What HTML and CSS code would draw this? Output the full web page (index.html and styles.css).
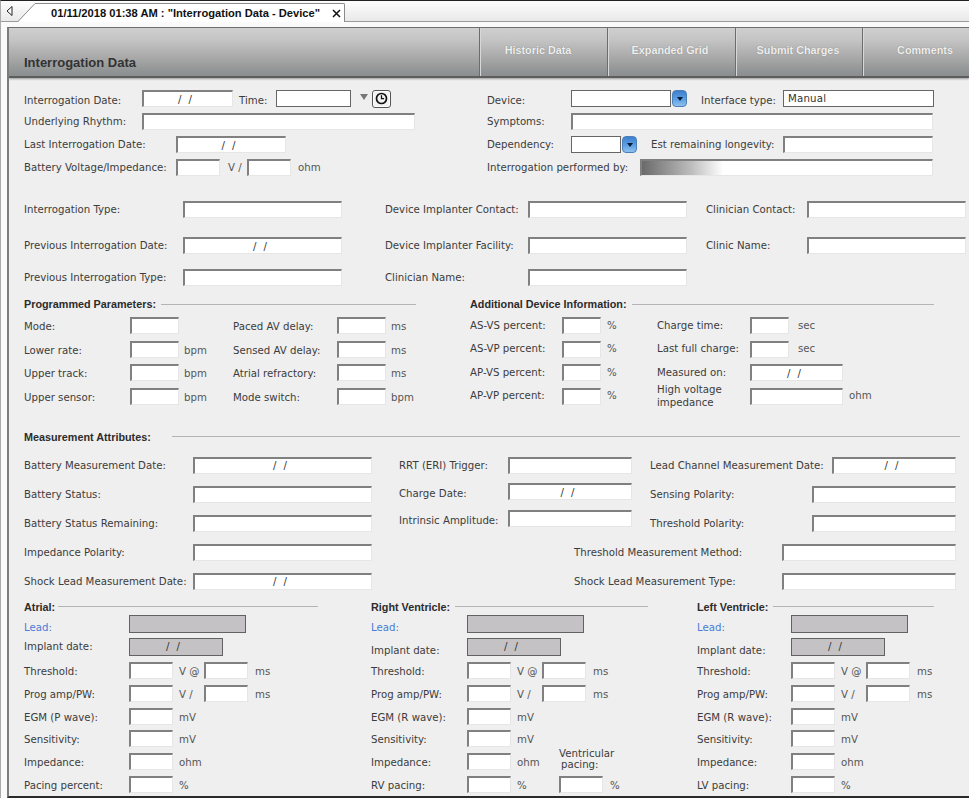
FILE: index.html
```html
<!DOCTYPE html>
<html lang="en">
<head>
<meta charset="utf-8">
<title>Interrogation Data - Device</title>
<link rel="stylesheet" href="styles.css">
</head>
<body>
<div class="app">
  <div class="tabstrip">
    <svg class="back" width="8" height="10" viewBox="0 0 8 10"><path d="M6 .5 1 5l5 4.5z" fill="#fff" stroke="#222"/></svg>
    <svg class="tab-slant" width="18" height="19" viewBox="0 0 18 19"><path d="M0 19 17 .5H18V19z" fill="#fff"/><path d="M0 18.5 17 .5H18" fill="none" stroke="#8a8a8a"/></svg>
    <div class="tab">
      <span class="tab-title">01/11/2018 01:38 AM : "Interrogation Data - Device"</span>
      <svg class="tab-close" width="9" height="9" viewBox="0 0 9 9"><path d="M1 1l7 7M8 1 1 8" stroke="#111" stroke-width="1.5"/></svg>
    </div>
  </div>

  <div class="panel">
    <header class="panel-head">
      <h1 class="title">Interrogation Data</h1>
      <nav class="actions">
        <a class="action a-128">Historic Data</a>
        <a class="action a-128">Expanded Grid</a>
        <a class="action a-127">Submit Charges</a>
        <a class="action a-107">Comments</a>
      </nav>
    </header>

    <main class="form">
      <section class="split">
        <div class="stack col-463 lift">
          <div class="row first">
            <label class="lb w-118">Interrogation Date:</label><input class="field w-91" value="/ /" readonly>
            <label class="lb w-37 ml-6">Time:</label><input class="field dark w-75" readonly>
            <span class="drop-slot"><i class="tri"></i></span>
            <button class="clock" type="button"><svg width="13" height="13" viewBox="0 0 13 13"><circle cx="6.5" cy="6.5" r="5" fill="none" stroke="#111" stroke-width="1.7"/><path d="M6.5 3.2v3.5h2.6" fill="none" stroke="#111" stroke-width="1.3"/></svg></button>
          </div>
          <div class="row"><label class="lb w-118">Underlying Rhythm:</label><input class="field w-273" readonly></div>
          <div class="row"><label class="lb w-152">Last Interrogation Date:</label><input class="field w-110" value="/ /" readonly></div>
          <div class="row">
            <label class="lb w-152">Battery Voltage/Impedance:</label><input class="field w-44" readonly>
            <span class="unit ml-8 w-19">V /</span><input class="field w-44" readonly><span class="unit ml-7">ohm</span>
          </div>
        </div>
        <div class="stack lift">
          <div class="row first">
            <label class="lb w-84">Device:</label><input class="field dark w-100" readonly>
            <button class="spin" type="button"><i></i></button>
            <label class="lb w-82 ml-14">Interface type:</label><input class="field dark w-151 left" value="Manual" readonly>
          </div>
          <div class="row"><label class="lb w-84">Symptoms:</label><input class="field w-362" readonly></div>
          <div class="row">
            <label class="lb w-84">Dependency:</label><input class="field dark w-50" readonly>
            <button class="spin" type="button"><i></i></button>
            <label class="lb w-132 ml-14">Est remaining longevity:</label><input class="field w-150" readonly>
          </div>
          <div class="row"><label class="lb w-153">Interrogation performed by:</label><input class="field busy w-293" readonly></div>
        </div>
      </section>

      <section class="contacts lift">
        <div class="row">
          <label class="lb w-159">Interrogation Type:</label><input class="field w-159" readonly>
          <label class="lb w-143 ml-43">Device Implanter Contact:</label><input class="field w-159" readonly>
          <label class="lb w-101 ml-19">Clinician Contact:</label><input class="field w-159" readonly>
        </div>
        <div class="row">
          <label class="lb w-159">Previous Interrogation Date:</label><input class="field w-159" value="/ /" readonly>
          <label class="lb w-143 ml-43">Device Implanter Facility:</label><input class="field w-159" readonly>
          <label class="lb w-101 ml-19">Clinic Name:</label><input class="field w-159" readonly>
        </div>
        <div class="row">
          <label class="lb w-159">Previous Interrogation Type:</label><input class="field w-159" readonly>
          <label class="lb w-143 ml-43">Clinician Name:</label><input class="field w-159" readonly>
        </div>
      </section>

      <section class="split params">
        <div class="col-446">
          <h2 class="heading w-392"><span>Programmed Parameters:</span></h2>
          <div class="stack tight sink">
            <div class="row"><label class="lb w-106">Mode:</label><input class="field w-49" readonly><span class="unit ml-5 w-49"></span><label class="lb w-104">Paced AV delay:</label><input class="field w-49" readonly><span class="unit ml-5">ms</span></div>
            <div class="row"><label class="lb w-106">Lower rate:</label><input class="field w-49" readonly><span class="unit ml-5 w-49">bpm</span><label class="lb w-104">Sensed AV delay:</label><input class="field w-49" readonly><span class="unit ml-5">ms</span></div>
            <div class="row"><label class="lb w-106">Upper track:</label><input class="field w-49" readonly><span class="unit ml-5 w-49">bpm</span><label class="lb w-104">Atrial refractory:</label><input class="field w-49" readonly><span class="unit ml-5">ms</span></div>
            <div class="row"><label class="lb w-106">Upper sensor:</label><input class="field w-49" readonly><span class="unit ml-5 w-49">bpm</span><label class="lb w-104">Mode switch:</label><input class="field w-49" readonly><span class="unit ml-5">bpm</span></div>
          </div>
        </div>
        <div>
          <h2 class="heading w-464"><span>Additional Device Information:</span></h2>
          <div class="stack tight lift">
            <div class="row"><label class="lb w-92">AS-VS percent:</label><input class="field w-39" readonly><span class="unit ml-6 w-50">%</span><label class="lb w-93">Charge time:</label><input class="field w-39" readonly><span class="unit ml-9">sec</span></div>
            <div class="row"><label class="lb w-92">AS-VP percent:</label><input class="field w-39" readonly><span class="unit ml-6 w-50">%</span><label class="lb w-93">Last full charge:</label><input class="field w-39" readonly><span class="unit ml-9">sec</span></div>
            <div class="row"><label class="lb w-92">AP-VS percent:</label><input class="field w-39" readonly><span class="unit ml-6 w-50">%</span><label class="lb w-93">Measured on:</label><input class="field w-93" value="/ /" readonly></div>
            <div class="row"><label class="lb w-92">AP-VP percent:</label><input class="field w-39" readonly><span class="unit ml-6 w-50">%</span><label class="lb w-93 wrap">High voltage impedance</label><input class="field w-93" readonly><span class="unit ml-6">ohm</span></div>
          </div>
        </div>
      </section>

      <section class="measure">
        <h2 class="heading w-936 measure-head"><span>Measurement Attributes:</span></h2>
        <div class="split">
          <div class="stack wide col-375">
            <div class="row"><label class="lb w-169">Battery Measurement Date:</label><input class="field w-179" value="/ /" readonly></div>
            <div class="row"><label class="lb w-169">Battery Status:</label><input class="field w-179" readonly></div>
            <div class="row"><label class="lb w-169">Battery Status Remaining:</label><input class="field w-179" readonly></div>
            <div class="row"><label class="lb w-169">Impedance Polarity:</label><input class="field w-179" readonly></div>
            <div class="row"><label class="lb w-169">Shock Lead Measurement Date:</label><input class="field w-179" value="/ /" readonly></div>
          </div>
          <div class="stack wide">
            <div class="split">
              <div class="stack mid col-251">
                <div class="row"><label class="lb w-109">RRT (ERI) Trigger:</label><input class="field w-124" readonly></div>
                <div class="row"><label class="lb w-109 sunk">Charge Date:</label><input class="field w-124" value="/ /" readonly></div>
                <div class="row"><label class="lb w-109 sunk">Intrinsic Amplitude:</label><input class="field w-124" readonly></div>
              </div>
              <div class="stack wide">
                <div class="row"><label class="lb w-182">Lead Channel Measurement Date:</label><input class="field w-124" value="/ /" readonly></div>
                <div class="row"><label class="lb w-162">Sensing Polarity:</label><input class="field w-144" readonly></div>
                <div class="row"><label class="lb w-162">Threshold Polarity:</label><input class="field w-144" readonly></div>
              </div>
            </div>
            <div class="row indent-175"><label class="lb w-208">Threshold Measurement Method:</label><input class="field w-174" readonly></div>
            <div class="row indent-175"><label class="lb w-208">Shock Lead Measurement Type:</label><input class="field w-174" readonly></div>
          </div>
        </div>
      </section>

      <section class="split chambers">
        <div class="chamber col-347">
          <h2 class="heading short w-294"><span>Atrial:</span></h2>
          <div class="leads">
            <div class="row tall"><label class="lb w-105 link low">Lead:</label><input class="field off w-117" readonly></div>
            <div class="row tall"><label class="lb w-105">Implant date:</label><input class="field off w-94" value="/ /" readonly></div>
          </div>
          <div class="vals">
            <div class="row"><label class="lb w-105">Threshold:</label><input class="field w-44" readonly><span class="unit ml-6 w-25">V @</span><input class="field w-44" readonly><span class="unit ml-7">ms</span></div>
            <div class="row"><label class="lb w-105">Prog amp/PW:</label><input class="field w-44" readonly><span class="unit ml-6 w-25">V /</span><input class="field w-44" readonly><span class="unit ml-7">ms</span></div>
            <div class="row"><label class="lb w-105">EGM (P wave):</label><input class="field w-44" readonly><span class="unit ml-6">mV</span></div>
            <div class="row"><label class="lb w-105">Sensitivity:</label><input class="field w-44" readonly><span class="unit ml-6">mV</span></div>
            <div class="row"><label class="lb w-105">Impedance:</label><input class="field w-44" readonly><span class="unit ml-6">ohm</span></div>
            <div class="row"><label class="lb w-105">Pacing percent:</label><input class="field w-44" readonly><span class="unit ml-6">%</span></div>
          </div>
        </div>
        <div class="chamber col-326">
          <h2 class="heading w-277"><span>Right Ventricle:</span></h2>
          <div class="leads">
            <div class="row tall"><label class="lb w-96 link low">Lead:</label><input class="field off w-117" readonly></div>
            <div class="row tall"><label class="lb w-96 low">Implant date:</label><input class="field off w-94" value="/ /" readonly></div>
          </div>
          <div class="vals">
            <div class="row"><label class="lb w-96">Threshold:</label><input class="field w-44" readonly><span class="unit ml-6 w-25">V @</span><input class="field w-44" readonly><span class="unit ml-7">ms</span></div>
            <div class="row"><label class="lb w-96">Prog amp/PW:</label><input class="field w-44" readonly><span class="unit ml-6 w-25">V /</span><input class="field w-44" readonly><span class="unit ml-7">ms</span></div>
            <div class="row"><label class="lb w-96">EGM (R wave):</label><input class="field w-44" readonly><span class="unit ml-6">mV</span></div>
            <div class="row"><label class="lb w-96">Sensitivity:</label><input class="field w-44" readonly><span class="unit ml-6">mV</span></div>
            <div class="row"><label class="lb w-96">Impedance:</label><input class="field w-44" readonly><span class="unit ml-6 w-42">ohm</span><label class="lb two-line">Ventricular<br><span class="nudge">pacing:</span></label></div>
            <div class="row"><label class="lb w-96">RV pacing:</label><input class="field w-44" readonly><span class="unit ml-6 w-42">%</span><input class="field w-44" readonly><span class="unit ml-7">%</span></div>
          </div>
        </div>
        <div class="chamber">
          <h2 class="heading w-237"><span>Left Ventricle:</span></h2>
          <div class="leads">
            <div class="row tall"><label class="lb w-94 link low">Lead:</label><input class="field off w-117" readonly></div>
            <div class="row tall"><label class="lb w-94 low">Implant date:</label><input class="field off w-94" value="/ /" readonly></div>
          </div>
          <div class="vals">
            <div class="row"><label class="lb w-94">Threshold:</label><input class="field w-44" readonly><span class="unit ml-6 w-25">V @</span><input class="field w-44" readonly><span class="unit ml-7">ms</span></div>
            <div class="row"><label class="lb w-94">Prog amp/PW:</label><input class="field w-44" readonly><span class="unit ml-6 w-25">V /</span><input class="field w-44" readonly><span class="unit ml-7">ms</span></div>
            <div class="row"><label class="lb w-94">EGM (R wave):</label><input class="field w-44" readonly><span class="unit ml-6">mV</span></div>
            <div class="row"><label class="lb w-94">Sensitivity:</label><input class="field w-44" readonly><span class="unit ml-6">mV</span></div>
            <div class="row"><label class="lb w-94">Impedance:</label><input class="field w-44" readonly><span class="unit ml-6">ohm</span></div>
            <div class="row"><label class="lb w-94">LV pacing:</label><input class="field w-44" readonly><span class="unit ml-6">%</span></div>
          </div>
        </div>
      </section>
    </main>
  </div>
</div>
</body>
</html>
```

FILE: styles.css
```css
* { box-sizing: border-box; }
html, body { margin: 0; height: 100%; overflow: hidden; }
body { background: #fafafa; font: 10.2px "DejaVu Sans", sans-serif; color: #3c3c3c; }

.app { height: 798px; display: flex; flex-direction: column; border-top: 1px solid #222; border-left: 1px solid #aaa; overflow: hidden; }

/* tab strip */
.tabstrip { height: 21px; flex: none; display: flex; align-items: flex-end; background: linear-gradient(#fdfdfd, #e9e9ea); border-bottom: 1px solid #9a9a9a; position: relative; }
.back { align-self: center; margin: 0 4px 0 5px; }
.tab-slant { margin-bottom: -1px; flex: none; }
.tab { width: 309px; height: 19px; margin-bottom: -1px; background: #fff; border-top: 1px solid #8a8a8a; border-right: 1px solid #8a8a8a; border-radius: 0 2px 0 0; display: flex; align-items: center; padding-left: 15px; }
.tab-title { font: bold 11.15px "Liberation Sans", sans-serif; color: #111; white-space: nowrap; width: 281px; }

/* panel */
.panel { flex: 1; min-height: 0; margin: 5px 0 0 6px; background: #efefef; border-left: 2px solid #7c7c7c; border-top: 1px solid #6e6e6e; border-bottom: 2px solid #2a2a2a; overflow: hidden; }
.panel-head { height: 50px; display: flex; justify-content: space-between; background: linear-gradient(#cfcfcf, #c4c4c4 25%, #a6a6a6 65%, #8b8f8f 97%); border-bottom: 2px solid #5d5d5d; box-shadow: 0 1px 2px #999; }
.title { margin: 0; align-self: flex-end; padding: 0 0 6px 15px; font: bold 13px "Liberation Sans", sans-serif; color: #333; }
.actions { display: flex; }
.action { display: flex; align-items: center; justify-content: center; padding-bottom: 4px; font: bold 10.8px "Liberation Sans", sans-serif; color: #efefef; text-shadow: 0 0 1px #777; border-left: 1px solid #6c6c6c; box-shadow: inset 1px 0 0 #d8d8d8; }
.action:nth-child(1) { padding-right: 11px; }
.action:nth-child(2) { padding-right: 3px; }
.action:nth-child(3) { padding-right: 2px; }
.action:nth-child(4) { padding-left: 18px; }
.a-128 { width: 128px; }
.a-127 { width: 127px; }
.a-107 { width: 107px; }

/* form */
.form { padding: 12px 0 0 15px; }
.split { display: flex; }
.stack { display: flex; flex-direction: column; gap: 6px; }
.stack.tight { gap: 6.67px; }
.stack.wide { gap: 12px; }
.stack.mid { gap: 9.4px; }
.row { display: flex; align-items: center; height: 17px; }
.row.tall { height: 18px; }
.lb { flex: none; white-space: nowrap; }
.lb.wrap { white-space: normal; line-height: 13px; margin-top: 1px; }
.lb.link { color: #4a7bd6; }
.lb.low { padding-top: 8px; }
.two-line { line-height: 11px; margin-bottom: 7px; }
.nudge { margin-left: 2px; }
.unit { flex: none; white-space: nowrap; color: #555; }

/* labels that sit a pixel above or below their field's centre */
.lift .row > .lb, .lift .row > .unit { padding-bottom: 1px; }
.lift .row.first > .lb { padding-bottom: 0; padding-top: 4px; }
.sink .row > .lb, .sink .row > .unit, .lb.sunk { padding-top: 2px; }
.lb.sunk { padding-top: 4px; }
.vals .row > .lb, .vals .row > .unit { padding-top: 2px; }

.field { flex: none; height: 17px; padding: 0; background: #fff; border: 1px solid #e6e6e6; border-top: 2px solid #808080; border-left: 2px solid #808080; text-align: center; font: 10.2px "DejaVu Sans", sans-serif; color: #333; outline: none; }
.field[value="/ /"] { padding-right: 6px; word-spacing: 4px; }
.field.dark { border: 1px solid #666; }
.field.left { text-align: left; padding-left: 4px; letter-spacing: .2px; }
.field.off { height: 18px; background: #c4c2c4; border: 1px solid #626262; }
.field.busy { background: linear-gradient(90deg, #6a6a6a, #bdbdbd 17%, #fff 28%); }

.drop-slot { width: 21px; flex: none; display: flex; justify-content: flex-end; padding-right: 4px; margin-top: -3px; }
.tri { width: 0; height: 0; border: 4px solid transparent; border-top: 6px solid #777; border-bottom: 0; }
.clock { width: 19px; height: 18px; padding: 0; flex: none; display: flex; align-items: center; justify-content: center; background: #f2f2f2; border: 1px solid #555; border-radius: 3px; box-shadow: inset 0 0 0 1px #fff; }
.spin { width: 15px; height: 17px; padding: 0; margin-left: 1px; flex: none; display: flex; align-items: center; justify-content: center; background: linear-gradient(#3f7fce, #5c9fe4 55%, #8fc0ee); border: 1px solid #4a7fb8; border-radius: 4px; }
.spin i { width: 0; height: 0; border: 3px solid transparent; border-top: 4px solid #0b1b33; border-bottom: 0; }

.col-463 { width: 463px; flex: none; }
.col-446 { width: 446px; flex: none; }
.col-375 { width: 375px; flex: none; }
.col-251 { width: 251px; flex: none; }
.col-347 { width: 347px; flex: none; }
.col-326 { width: 326px; flex: none; }

.contacts { margin-top: 25px; }
.contacts .row + .row { margin-top: 19px; }
.contacts .row + .row + .row { margin-top: 15px; }

.heading { display: flex; align-items: center; margin: 0 0 6px; height: 14px; font: bold 10.8px "Liberation Sans", sans-serif; color: #2c2c2c; white-space: nowrap; }
.heading::after { content: ""; flex: 1; height: 1px; margin-left: 5px; background: #b4b4b4; }
.heading.short::after { margin-left: 3px; }
.measure-head::after { margin-left: 21px; }

.params { margin-top: 11px; }
.measure { margin-top: 25px; }
.measure-head { margin-bottom: 13px; }
.indent-175 { margin-left: 175px; }
.chambers { margin-top: 10px; }
.chamber .heading { margin-bottom: 1px; }
.leads { display: flex; flex-direction: column; gap: 5px; }
.vals { display: flex; flex-direction: column; gap: 5.8px; margin-top: 6px; }

.w-19{width:19px}.w-25{width:25px}.w-37{width:37px}.w-39{width:39px}.w-42{width:42px}.w-44{width:44px}.w-49{width:49px}.w-50{width:50px}
.w-75{width:75px}.w-82{width:82px}.w-84{width:84px}.w-91{width:91px}.w-92{width:92px}.w-93{width:93px}.w-94{width:94px}.w-96{width:96px}
.w-100{width:100px}.w-101{width:101px}.w-104{width:104px}.w-105{width:105px}.w-106{width:106px}.w-109{width:109px}.w-110{width:110px}
.w-117{width:117px}.w-118{width:118px}.w-124{width:124px}.w-132{width:132px}.w-143{width:143px}.w-144{width:144px}.w-150{width:150px}.w-151{width:151px}
.w-152{width:152px}.w-153{width:153px}.w-159{width:159px}.w-162{width:162px}.w-169{width:169px}.w-174{width:174px}.w-179{width:179px}.w-182{width:182px}
.w-208{width:208px}.w-237{width:237px}.w-273{width:273px}.w-277{width:277px}.w-293{width:293px}.w-294{width:294px}.w-362{width:362px}.w-392{width:392px}.w-464{width:464px}.w-936{width:936px}
.ml-5{margin-left:5px}.ml-6{margin-left:6px}.ml-7{margin-left:7px}.ml-8{margin-left:8px}.ml-9{margin-left:9px}.ml-14{margin-left:14px}.ml-19{margin-left:19px}.ml-43{margin-left:43px}
```
